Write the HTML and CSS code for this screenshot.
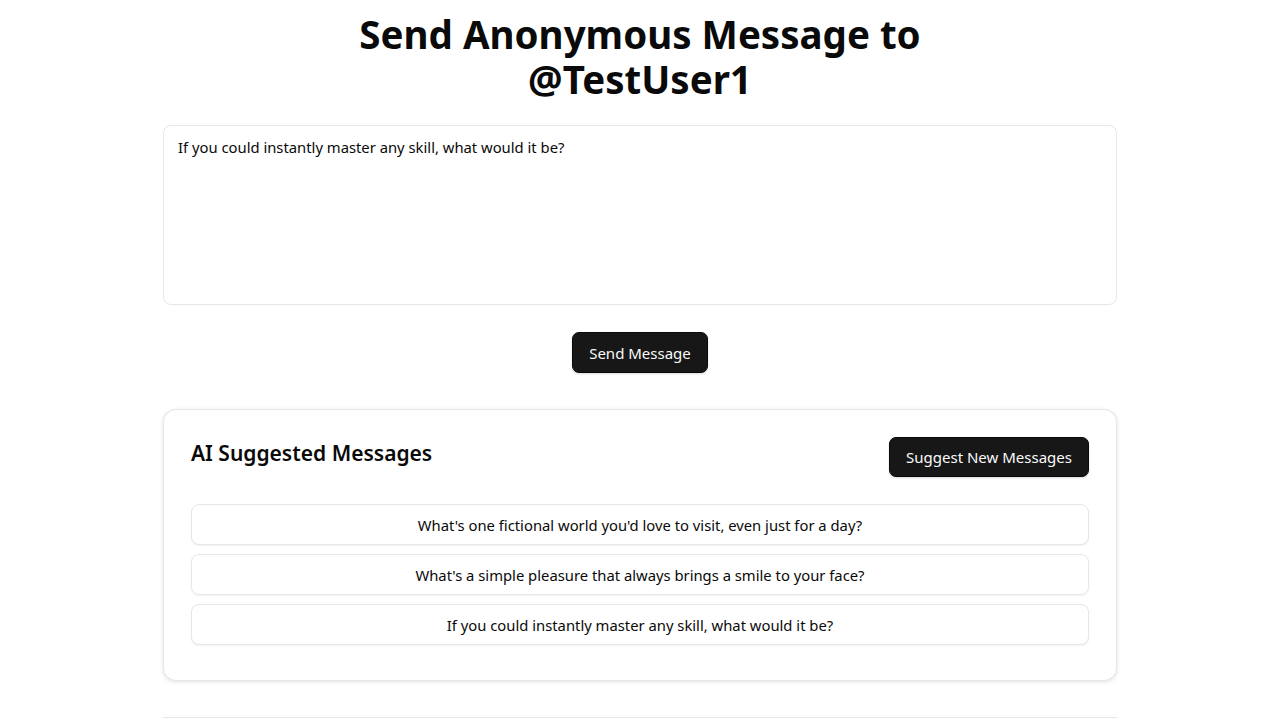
FILE: index.html
```html
<!DOCTYPE html>
<html lang="en">
<head>
<meta charset="utf-8">
<title>Send Anonymous Message</title>
<link rel="stylesheet" href="styles.css">
</head>
<body>
<main class="page">
  <h1 class="title">Send Anonymous Message to<br>@TestUser1</h1>
  <div class="composer">
    <textarea class="message-input">If you could instantly master any skill, what would it be?</textarea>
  </div>
  <div class="send-row">
    <button class="btn btn-send">Send Message</button>
  </div>
  <section class="card">
    <div class="card-header">
      <h3 class="card-title">AI Suggested Messages</h3>
      <button class="btn btn-suggest">Suggest New Messages</button>
    </div>
    <div class="suggestions">
      <button class="suggestion">What's one fictional world you'd love to visit, even just for a day?</button>
      <button class="suggestion">What's a simple pleasure that always brings a smile to your face?</button>
      <button class="suggestion">If you could instantly master any skill, what would it be?</button>
    </div>
  </section>
  <hr class="divider">
</main>
</body>
</html>
```
FILE: styles.css
```css
* { box-sizing: border-box; }
html, body { margin: 0; padding: 0; background: #ffffff; }
body {
  font-family: "Noto Sans", "Open Sans", sans-serif;
  color: #0a0a0a;
}
.page {
  width: 954px;
  margin: 0 auto;
  padding-top: 12px;
}
.title {
  margin: 0;
  text-align: center;
  font-size: 38.5px;
  line-height: 45px;
  font-weight: 700;
  color: #0a0a0a;
}
.composer { margin-top: 23px; }
.message-input {
  display: block;
  width: 100%;
  height: 180px;
  resize: none;
  border: 1px solid #e5e7eb;
  border-radius: 8px;
  padding: 11px 14px;
  font-family: inherit;
  font-size: 14.8px;
  line-height: 20px;
  color: #0a0a0a;
  background: #fff;
  outline: none;
}
.send-row {
  display: flex;
  justify-content: center;
  margin-top: 27px;
}
.btn {
  font-family: inherit;
  border: 1px solid #0a0a0a;
  background: #171717;
  color: #fafafa;
  border-radius: 7px;
  cursor: pointer;
  box-shadow: 0 1px 2px rgba(0,0,0,0.15);
}
.btn-send {
  width: 136px;
  height: 41px;
  font-size: 15px;
}
.card {
  margin-top: 36px;
  border: 1px solid #e5e7eb;
  border-radius: 13px;
  box-shadow: 0 1px 4px rgba(0,0,0,0.12);
  padding: 27px 27px 35px;
  background: #fff;
}
.card-header {
  display: flex;
  justify-content: space-between;
  align-items: flex-start;
}
.card-title {
  margin: 2px 0 0;
  font-size: 21px;
  line-height: 28px;
  font-weight: 600;
}
.btn-suggest {
  width: 200px;
  height: 40px;
  font-size: 15px;
}
.suggestions {
  margin-top: 27px;
  display: flex;
  flex-direction: column;
  gap: 9px;
}
.suggestion {
  height: 41px;
  width: 100%;
  border: 1px solid #e5e7eb;
  border-radius: 8px;
  background: #fff;
  box-shadow: 0 1px 2px rgba(0,0,0,0.06);
  font-family: inherit;
  font-size: 14.8px;
  color: #0a0a0a;
  cursor: pointer;
}
.divider {
  margin: 36px 0 0;
  border: 0;
  border-top: 1px solid #e5e7eb;
}
```
